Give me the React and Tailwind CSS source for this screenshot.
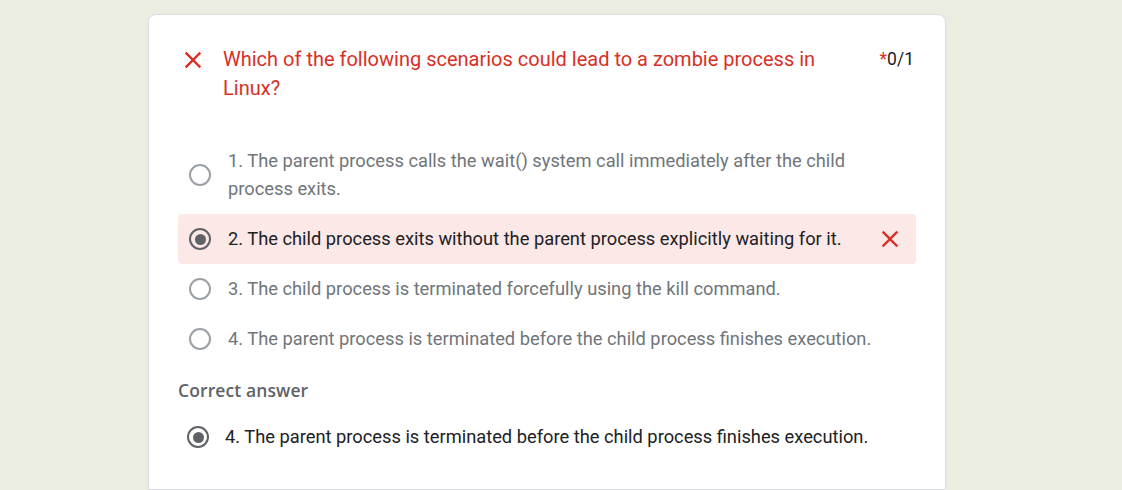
import React from 'react';

const options = [
  { id: 1, text: '1. The parent process calls the wait() system call immediately after the child process exits.' },
  { id: 2, text: '2. The child process exits without the parent process explicitly waiting for it.', chosen: true },
  { id: 3, text: '3. The child process is terminated forcefully using the kill command.' },
  { id: 4, text: '4. The parent process is terminated before the child process finishes execution.' },
];

function CloseIcon({ className }) {
  return (
    <svg viewBox="0 0 24 24" className={className} fill="currentColor">
      <path d="M19 6.41 17.59 5 12 10.59 6.41 5 5 6.41 10.59 12 5 17.59 6.41 19 12 13.41 17.59 19 19 17.59 13.41 12z" />
    </svg>
  );
}

function Radio({ checked }) {
  return (
    <div
      className={
        'w-[22px] h-[22px] shrink-0 rounded-full border-[2.5px] flex items-center justify-center ' +
        (checked ? 'border-[#5f6368]' : 'border-[#9aa0a6]')
      }
    >
      {checked && <div className="w-[11px] h-[11px] rounded-full bg-[#5f6368]" />}
    </div>
  );
}

export default function App() {
  return (
    <div className="min-h-[490px] bg-[#ebede1] pt-[14px] font-['Roboto',sans-serif]">
      <div className="ml-[148px] w-[798px] h-[476px] bg-white rounded-t-lg border border-[#dadce0] px-[29px] pt-[30px]">
        {/* pergunta */}
        <div className="flex items-start">
          <CloseIcon className="w-7 h-7 mt-[1px] ml-[1px] text-[#d93025] shrink-0" />
          <div className="ml-[16px] flex-1 text-[20px] leading-[29px] text-[#d93025] pr-14">
            Which of the following scenarios could lead to a zombie process in Linux?
          </div>
          <div className="text-[17.5px] leading-[29px] text-[#202124] mr-[2px]">
            <span className="text-[#d93025]">*</span>0/1
          </div>
        </div>

        {/* opções */}
        <div className="mt-[33px] flex flex-col">
          {options.map((o) => (
            <div
              key={o.id}
              className={
                'flex items-center pl-[11px] pr-[12px] py-[11px] rounded ' +
                (o.chosen ? 'bg-[#fce8e6]' : '')
              }
            >
              <Radio checked={o.chosen} />
              <div
                className={
                  'ml-[17px] flex-1 text-[18.3px] leading-[28px] pr-6 ' +
                  (o.chosen ? 'text-[#202124]' : 'text-[#70757a]')
                }
              >
                {o.text}
              </div>
              {o.chosen && <CloseIcon className="w-7 h-7 text-[#d93025] shrink-0" />}
            </div>
          ))}
        </div>

        {/* resposta correta */}
        <div className="mt-[14px] text-[17.5px] leading-[24px] font-semibold text-[#5f6368] font-['Open_Sans',sans-serif] tracking-[0.1px]">
          Correct answer
        </div>
        <div className="mt-[10px] flex items-center pl-[9px] py-[11px]">
          <Radio checked />
          <div className="ml-[16px] text-[18.3px] leading-[28px] text-[#202124]">
            4. The parent process is terminated before the child process finishes execution.
          </div>
        </div>
      </div>
    </div>
  );
}
